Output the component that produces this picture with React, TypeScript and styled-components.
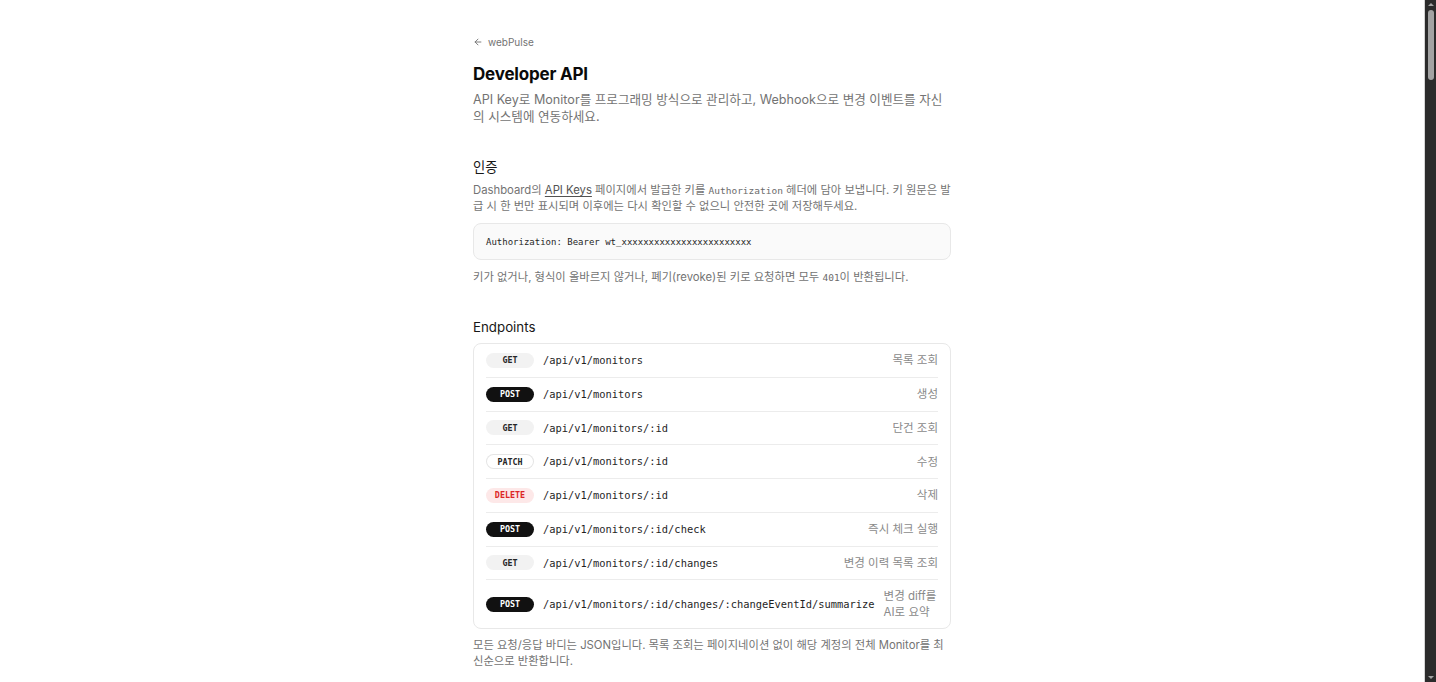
import React from 'react';
import styled, { createGlobalStyle, css } from 'styled-components';

type Method = 'GET' | 'POST' | 'PATCH' | 'DELETE';

interface Endpoint {
  method: Method;
  path: string;
  desc: string;
}

const endpoints: Endpoint[] = [
  { method: 'GET', path: '/api/v1/monitors', desc: '목록 조회' },
  { method: 'POST', path: '/api/v1/monitors', desc: '생성' },
  { method: 'GET', path: '/api/v1/monitors/:id', desc: '단건 조회' },
  { method: 'PATCH', path: '/api/v1/monitors/:id', desc: '수정' },
  { method: 'DELETE', path: '/api/v1/monitors/:id', desc: '삭제' },
  { method: 'POST', path: '/api/v1/monitors/:id/check', desc: '즉시 체크 실행' },
  { method: 'GET', path: '/api/v1/monitors/:id/changes', desc: '변경 이력 목록 조회' },
  {
    method: 'POST',
    path: '/api/v1/monitors/:id/changes/:changeEventId/summarize',
    desc: '변경 diff를 AI로 요약',
  },
];

const sampleResponse = (ep: Endpoint) => {
  if (ep.method === 'DELETE') return 'HTTP/1.1 204 No Content';
  if (ep.path.endsWith('/changes')) {
    return `[
  {
    "id": "chg_01HZX3K9",
    "monitorId": "mon_01HZX2A1",
    "detectedAt": "2024-06-01T09:12:44Z",
    "addedLines": 12,
    "removedLines": 3
  }
]`;
  }
  if (ep.path.endsWith('/summarize')) {
    return `{
  "changeEventId": "chg_01HZX3K9",
  "summary": "가격 정보가 29,000원에서 25,000원으로 변경되었습니다.",
  "model": "gpt-4o-mini"
}`;
  }
  if (ep.path.endsWith('/check')) {
    return `{
  "monitorId": "mon_01HZX2A1",
  "status": "queued",
  "requestedAt": "2024-06-01T09:12:40Z"
}`;
  }
  return `{
  "id": "mon_01HZX2A1",
  "name": "요금제 페이지",
  "url": "https://example.com/pricing",
  "selector": "#plans",
  "intervalMinutes": 60,
  "active": true,
  "createdAt": "2024-05-28T02:10:00Z",
  "lastCheckedAt": "2024-06-01T09:00:00Z"
}`;
};

const sampleRequest = (ep: Endpoint) => {
  const url = 'https://webpulse.app' + ep.path.replace(':id', 'mon_01HZX2A1').replace(':changeEventId', 'chg_01HZX3K9');
  const body =
    ep.method === 'POST' && ep.path === '/api/v1/monitors'
      ? ` \\
  -H "Content-Type: application/json" \\
  -d '{"name":"요금제 페이지","url":"https://example.com/pricing","intervalMinutes":60}'`
      : ep.method === 'PATCH'
      ? ` \\
  -H "Content-Type: application/json" \\
  -d '{"intervalMinutes":30,"active":false}'`
      : '';
  return `curl -X ${ep.method} ${url} \\
  -H "Authorization: Bearer wt_xxxxxxxxxxxxxxxxxxxxxxxx"${body}`;
};

const GlobalStyle = createGlobalStyle`
  body {
    margin: 0 12px 0 0;
    background: #ffffff;
    color: #171717;
    font-family: Inter, "Noto Sans CJK KR", sans-serif;
    -webkit-font-smoothing: antialiased;
  }
`;

/* dark window scrollbar shown at the right edge of the reference */
const ScrollTrack = styled.div`
  position: fixed;
  top: 0;
  right: 0;
  bottom: 0;
  width: 12px;
  background: #2b2b2b;
  border-left: 1px solid #d4d4d4;
  box-sizing: border-box;
  display: flex;
  flex-direction: column;
  align-items: center;
  padding: 3px 0;
`;

const ScrollArrow = styled.span<{ $down?: boolean }>`
  width: 0;
  height: 0;
  border-left: 3px solid transparent;
  border-right: 3px solid transparent;
  ${({ $down }) =>
    $down
      ? css`
          border-top: 3px solid #a3a3a3;
          margin-top: auto;
        `
      : css`
          border-bottom: 3px solid #a3a3a3;
        `}
`;

const ScrollThumb = styled.span`
  margin-top: 4px;
  width: 6px;
  height: 70px;
  border-radius: 3px;
  background: #a3a3a3;
`;

const Page = styled.main`
  max-width: 478px;
  margin: 0 auto;
  padding: 34px 16px 120px;
`;

const BackLink = styled.a`
  display: flex;
  width: fit-content;
  align-items: center;
  gap: 5px;
  font-size: 10px;
  line-height: 16px;
  color: #737373;
  text-decoration: none;
`;

const Title = styled.h1`
  margin: 12px 0 0;
  font-size: 17px;
  line-height: 24px;
  font-weight: 700;
  letter-spacing: -0.2px;
  color: #0a0a0a;
`;

const Lead = styled.p`
  margin: 5px 0 0;
  font-size: 12.6px;
  line-height: 17px;
  color: #737373;
`;

const Section = styled.section`
  margin-top: 32px;
`;

const SectionTitle = styled.h2`
  margin: 0 0 5px;
  font-size: 13.3px;
  line-height: 20px;
  font-weight: 400;
  color: #171717;
`;

const SubTitle = styled.h3`
  margin: 20px 0 6px;
  font-size: 12px;
  line-height: 16px;
  font-weight: 600;
  color: #262626;
  font-family: "DejaVu Sans Mono", monospace;
`;

const Text = styled.p<{ $gap?: boolean }>`
  margin: ${({ $gap }) => ($gap ? '8px 0 0' : '0')};
  font-size: 11.3px;
  line-height: 16px;
  color: #737373;
`;

const Link = styled.a`
  color: #525252;
  text-decoration: underline;
  text-underline-offset: 2px;
`;

const InlineCode = styled.code`
  font-family: "DejaVu Sans Mono", "Noto Sans CJK KR", monospace;
  font-size: 9.5px;
  line-height: 1;
  color: #6b6b6b;
`;

const CodeBlock = styled.pre`
  margin: 9px 0;
  padding: 12.5px 12px;
  border: 1px solid #e8e8e8;
  border-radius: 8px;
  background: #fafafa;
  font-family: "DejaVu Sans Mono", "Noto Sans CJK KR", monospace;
  font-size: 9px;
  line-height: 10px;
  color: #262626;
  white-space: pre-wrap;
  word-break: break-all;
`;

const Card = styled.div`
  margin-top: 6px;
  padding: 0 12px;
  border: 1px solid #e8e8e8;
  border-radius: 8px;
  background: #fff;
`;

const Row = styled.div`
  display: flex;
  align-items: center;
  gap: 9px;
  padding: 8px 0;
  border-bottom: 1px solid #ececec;

  &:last-child {
    border-bottom: none;
  }
`;

const methodStyles: Record<Method, ReturnType<typeof css>> = {
  GET: css`
    background: #f2f2f2;
    color: #262626;
  `,
  POST: css`
    background: #111111;
    color: #ffffff;
  `,
  PATCH: css`
    background: #ffffff;
    color: #262626;
    box-shadow: inset 0 0 0 1px #e5e5e5;
  `,
  DELETE: css`
    background: #fde8e8;
    color: #dc2626;
  `,
};

const Badge = styled.span<{ $method: Method }>`
  flex: 0 0 48px;
  height: 15px;
  display: inline-flex;
  align-items: center;
  justify-content: center;
  border-radius: 999px;
  font-family: "DejaVu Sans Mono", monospace;
  font-size: 8.4px;
  font-weight: 700;
  ${({ $method }) => methodStyles[$method]}
`;

const Path = styled.code`
  flex-shrink: 0;
  white-space: nowrap;
  font-family: "DejaVu Sans Mono", monospace;
  font-size: 10.4px;
  line-height: 16.75px;
  color: #1f1f1f;
`;

const Desc = styled.span`
  margin-left: auto;
  font-size: 11.5px;
  line-height: 16px;
  color: #8a8a8a;
  word-break: keep-all;
`;

const ArrowLeft = () => (
  <svg width="10" height="10" viewBox="0 0 24 24" fill="none" stroke="currentColor" strokeWidth="2.2" strokeLinecap="round" strokeLinejoin="round">
    <path d="M19 12H5" />
    <path d="M12 19l-7-7 7-7" />
  </svg>
);

const App: React.FC = () => {
  return (
    <>
      <GlobalStyle />
      <ScrollTrack>
        <ScrollArrow />
        <ScrollThumb />
        <ScrollArrow $down />
      </ScrollTrack>
      <Page>
        <BackLink href="#">
          <ArrowLeft />
          webPulse
        </BackLink>
        <Title>Developer API</Title>
        <Lead>
          API Key로 Monitor를 프로그래밍 방식으로 관리하고, Webhook으로 변경 이벤트를 자신의 시스템에 연동하세요.
        </Lead>

        <Section>
          <SectionTitle>인증</SectionTitle>
          <Text>
            Dashboard의 <Link href="#">API Keys</Link> 페이지에서 발급한 키를 <InlineCode>Authorization</InlineCode> 헤더에
            담아 보냅니다. 키 원문은 발급 시 한 번만 표시되며 이후에는 다시 확인할 수 없으니 안전한 곳에 저장해두세요.
          </Text>
          <CodeBlock>Authorization: Bearer wt_xxxxxxxxxxxxxxxxxxxxxxxx</CodeBlock>
          <Text>
            키가 없거나, 형식이 올바르지 않거나, 폐기(revoke)된 키로 요청하면 모두 <InlineCode>401</InlineCode>이 반환됩니다.
          </Text>
        </Section>

        <Section>
          <SectionTitle>Endpoints</SectionTitle>
          <Card>
            {endpoints.map((ep) => (
              <Row key={ep.method + ep.path}>
                <Badge $method={ep.method}>{ep.method}</Badge>
                <Path>{ep.path}</Path>
                <Desc>{ep.desc}</Desc>
              </Row>
            ))}
          </Card>
          <Text $gap>
            모든 요청/응답 바디는 JSON입니다. 목록 조회는 페이지네이션 없이 해당 계정의 전체 Monitor를 최신순으로 반환합니다.
          </Text>
        </Section>

        {endpoints.map((ep) => (
          <Section key={'detail' + ep.method + ep.path}>
            <SectionTitle>
              {ep.method} {ep.desc}
            </SectionTitle>
            <Text>
              <InlineCode>{ep.path}</InlineCode>
            </Text>
            <SubTitle>Request</SubTitle>
            <CodeBlock>{sampleRequest(ep)}</CodeBlock>
            <SubTitle>Response</SubTitle>
            <CodeBlock>{sampleResponse(ep)}</CodeBlock>
          </Section>
        ))}

        <Section>
          <SectionTitle>Webhook</SectionTitle>
          <Text>
            Monitor에서 변경이 감지되면 등록한 URL로 <InlineCode>POST</InlineCode> 요청을 보냅니다. 2xx 이외의 응답을 받으면
            최대 3회까지 지수 백오프로 재시도합니다.
          </Text>
          <CodeBlock>{`{
  "type": "monitor.changed",
  "monitorId": "mon_01HZX2A1",
  "changeEventId": "chg_01HZX3K9",
  "detectedAt": "2024-06-01T09:12:44Z",
  "url": "https://example.com/pricing"
}`}</CodeBlock>
          <Text>
            모든 Webhook 요청에는 <InlineCode>X-WebPulse-Signature</InlineCode> 헤더가 포함됩니다. 발급된 시크릿으로 요청 바디의
            HMAC-SHA256 값을 계산해 서명을 검증하세요.
          </Text>
          <CodeBlock>{`const expected = crypto
  .createHmac('sha256', process.env.WEBPULSE_SECRET)
  .update(rawBody)
  .digest('hex');

if (expected !== req.headers['x-webpulse-signature']) {
  return res.status(401).end();
}`}</CodeBlock>
        </Section>
      </Page>
    </>
  );
};

export default App;
